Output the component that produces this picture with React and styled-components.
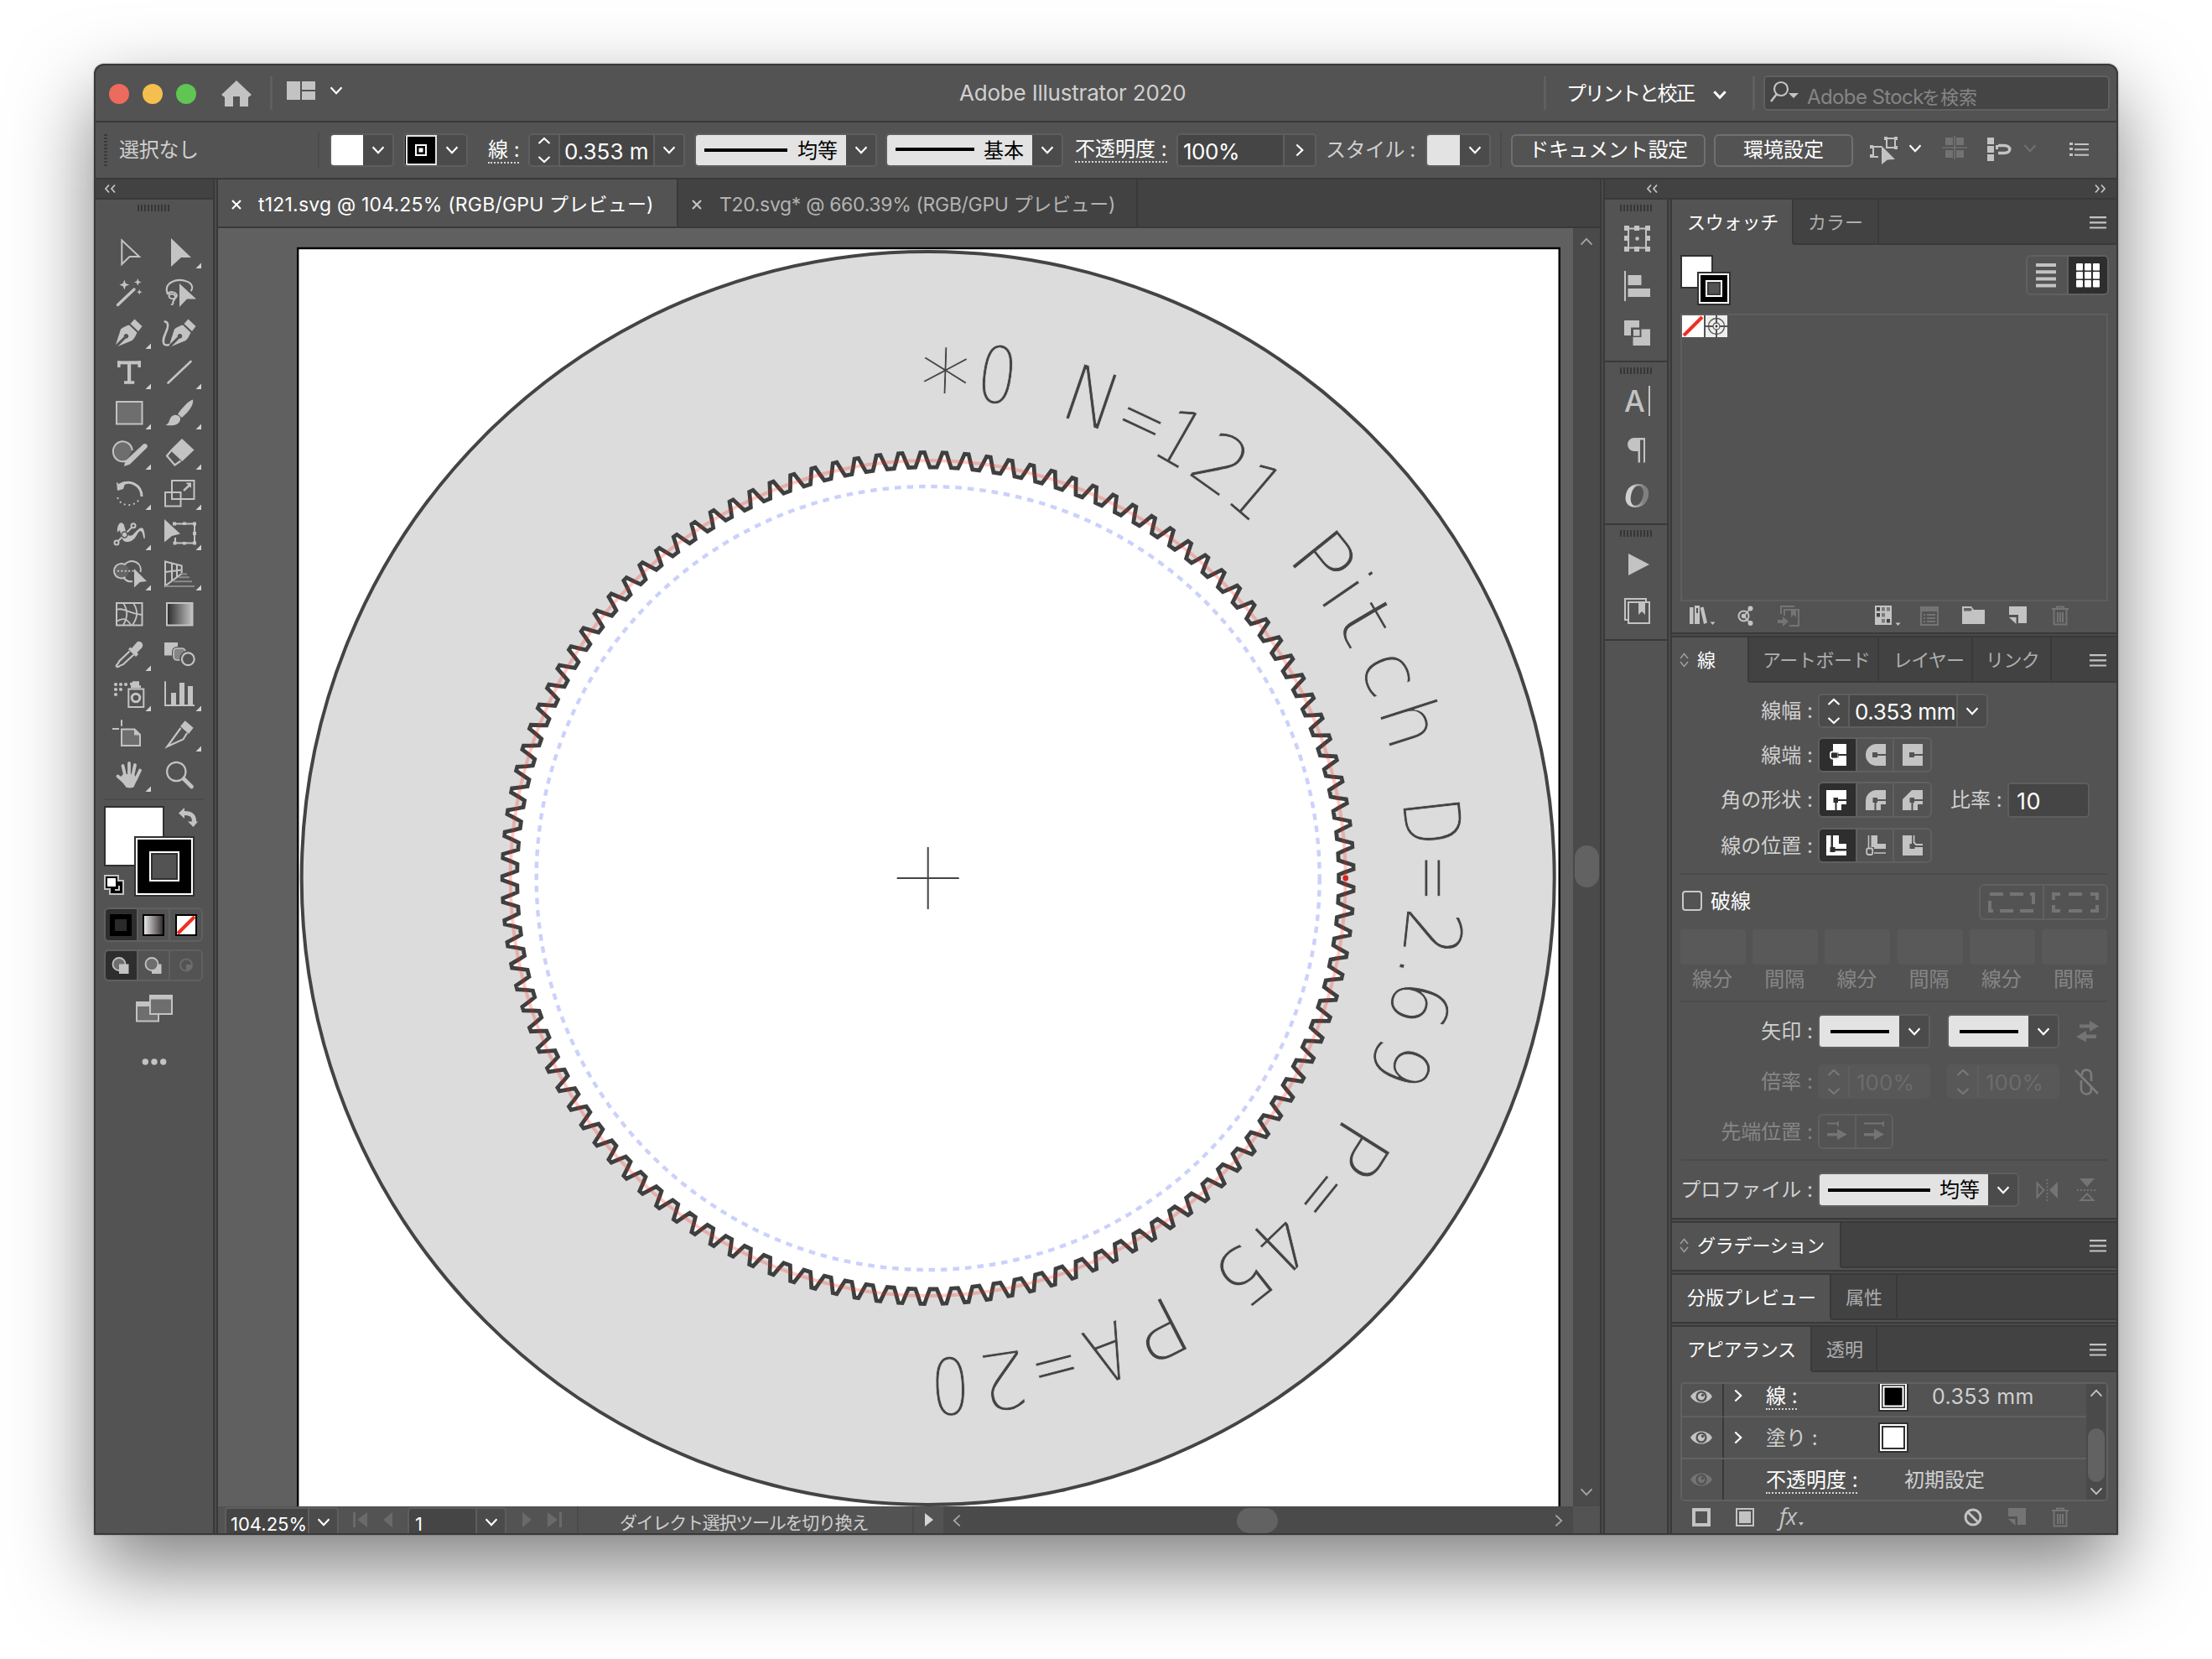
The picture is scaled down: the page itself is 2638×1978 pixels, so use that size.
import React from "react";
import styled, { createGlobalStyle, css } from "styled-components";

const C = {
  bg: "#535353",
  dark: "#424242",
  line: "#393939",
  soft: "#4a4a4a",
  input: "#454545",
  edge: "#646464",
  icon: "#c3c3c3",
  text: "#d0d0d0",
  dim: "#747474",
  dimText: "#868686",
  paper: "#e3e3e3",
  on: "#2e2e2e",
};

const Global = createGlobalStyle`
  *, *::before, *::after { box-sizing: border-box; }
  body { margin: 0; background: #fff; font-family: Inter, "Noto Sans CJK JP", sans-serif; overflow: hidden; }
`;

const place = css`
  flex: none;
  margin-left: ${(p) => p.$ml || 0}px;
  margin-top: ${(p) => p.$mt || 0}px;
`;

/* ---------- shell ---------- */
const Desktop = styled.div`
  width: 2638px;
  height: 1978px;
  padding: 76px 112px;
  background: #fff;
  overflow: hidden;
`;
const Window = styled.div`
  width: 2414px;
  height: 1754px;
  display: flex;
  flex-direction: column;
  border: 2px solid ${C.line};
  border-radius: 12px 12px 0 0;
  background: ${C.bg};
  overflow: hidden;
  box-shadow: 0 0 2px rgba(0, 0, 0, 0.4), 0 40px 96px rgba(0, 0, 0, 0.5);
`;
const TitleBar = styled.header`
  height: 68px;
  flex: none;
  display: flex;
  align-items: center;
  border-bottom: 2px solid ${C.line};
`;
const ControlBar = styled(TitleBar)``;
const Body = styled.div`
  height: 1614px;
  display: flex;
  background: ${C.soft};
`;
const Label = styled.span`
  ${place}
  display: block;
  width: ${(p) => (p.$w ? p.$w + "px" : "auto")};
  font-size: ${(p) => p.$size || 24}px;
  letter-spacing: ${(p) => p.$ls || 0}px;
  line-height: 30px;
  color: ${(p) => p.$c || C.text};
  text-align: ${(p) => p.$align || "left"};
  white-space: pre;
  overflow: ${(p) => (p.$clip ? "hidden" : "visible")};
`;
const Linked = styled(Label)`
  color: #fff;
  line-height: 28px;
  border-bottom: 2px dotted #d5d5d5;
`;
const Light = styled.i`
  ${place}
  width: 24px;
  height: 24px;
  border-radius: 50%;
  background: ${(p) => p.$c};
`;
const VRule = styled.i`
  ${place}
  width: ${(p) => p.$w || 3}px;
  height: ${(p) => p.$h || 40}px;
  background: ${(p) => p.$c || "#5f5f5f"};
`;
const Svg = styled.svg`
  ${place}
  display: block;
  overflow: visible;
`;
function Icon({ w, h, x = 0, y = 0, ml, mt, children, c = C.icon }) {
  return (
    <Svg width={w} height={h} viewBox={`${x} ${y} ${w} ${h}`} $ml={ml} $mt={mt} fill={c} stroke="none" color={c}>
      {children}
    </Svg>
  );
}
const chev = { down: 0, up: 180, left: 90, right: -90 };
function Chevron({ dir = "down", w = 24, h = 24, ml, mt, c = "#fff", sw = 2.4, s = 0.92 }) {
  return (
    <Icon w={w} h={h} x={-w / 2} y={-h / 2} ml={ml} mt={mt}>
      <path d="M-7 -4L0 3.5L7 -4" transform={`rotate(${chev[dir]}) scale(${s})`} fill="none" stroke={c} strokeWidth={sw} />
    </Icon>
  );
}

/* ---------- form parts ---------- */
const Box = styled.div`
  ${place}
  display: flex;
  align-items: stretch;
  width: ${(p) => p.$w}px;
  height: ${(p) => p.$h || 40}px;
  border: 2px solid ${(p) => (p.$off ? "#585858" : "#5e5e5e")};
  border-radius: 5px;
  background: ${(p) => (p.$off ? "#585858" : "#4b4b4b")};
  overflow: hidden;
`;
const Cell = styled.div`
  flex: ${(p) => (p.$w ? "none" : 1)};
  width: ${(p) => (p.$w ? p.$w + "px" : "auto")};
  display: flex;
  align-items: center;
  justify-content: ${(p) => (p.$start ? "flex-start" : "center")};
  padding-left: ${(p) => p.$pl || 0}px;
  background: ${(p) => p.$bg || "transparent"};
  border-left: ${(p) => (p.$rule ? "2px solid #5e5e5e" : "0")};
  overflow: hidden;
`;
const Stepper = ({ c = "#fff", h = 36 }) => (
  <Icon w={34} h={h} x={-17} y={-h / 2}>
    <path d="M-6.500 -8L0 -14L6.500 -8M-6.500 8L0 14L6.500 8" fill="none" stroke={c} strokeWidth="2.2" />
  </Icon>
);
const Sample = styled.i`
  ${place}
  width: ${(p) => p.$w}px;
  height: 4px;
  background: #000;
`;
const PushButton = styled.button`
  ${place}
  width: ${(p) => p.$w}px;
  height: 39px;
  padding: 0 0 1px;
  border: 2px solid #707070;
  border-radius: 6px;
  background: transparent;
  color: #fff;
  font: 24px/30px Inter, "Noto Sans CJK JP", sans-serif;
  letter-spacing: ${(p) => p.$ls || 0}px;
  white-space: nowrap;
`;
const Segments = styled.div`
  ${place}
  display: flex;
  width: ${(p) => p.$w}px;
  height: ${(p) => p.$h}px;
  border: 2px solid #606060;
  border-radius: 6px;
  overflow: hidden;
`;
const Segment = styled.div`
  flex: 1;
  display: flex;
  align-items: center;
  justify-content: center;
  background: ${(p) => (p.$on ? C.on : "transparent")};
  & + & {
    border-left: 2px solid #606060;
  }
`;
const GripBox = styled.i`
  ${place}
  display: block;
  width: 39px;
  height: 8px;
  background: repeating-linear-gradient(90deg, #363636 0 2px, transparent 2px 4px);
`;
const SideGrip = styled.i`
  ${place}
  width: 4px;
  height: 38px;
  background: repeating-linear-gradient(180deg, #3a3a3a 0 2px, transparent 2px 4px);
`;

/* ---------- tool dock ---------- */
const ToolDock = styled.aside`
  width: 142px;
  flex: none;
  background: ${C.bg};
  border-right: 2px solid ${C.line};
  display: flex;
  flex-direction: column;
`;
const DockHead = styled.div`
  height: 24px;
  flex: none;
  display: flex;
  align-items: center;
  background: ${C.dark};
  border-bottom: 2px solid ${C.line};
`;
const ToolGrid = styled.div`
  display: grid;
  grid-template-columns: 60px 60px;
  grid-auto-rows: 48px;
  margin: 20px 0 0 6px;
`;
const Divider = styled.i`
  ${place}
  display: block;
  height: 2px;
  width: ${(p) => p.$w}px;
  background: #4b4b4b;
`;
const S = { fill: "none", stroke: C.icon, strokeWidth: 2 };
const penBody = (
  <>
    <path d="M40.500 12.500L49.500 21L45 27L35.500 18z" />
    <path fillRule="evenodd" d="M34 19.500L43.500 28.500C41.500 33 40 36 37.500 38L20.500 45L30 35.500A2.800 2.800 0 1 0 27.800 33.500L18 43L24 24.500C27 22 30.500 20.500 34 19.500z" />
  </>
);
const tools = [
  [<path {...S} strokeWidth="2" d="M25.300 14.500L46 34H34.500L25.300 43z" />, 0],
  [<path d="M24 12L48 35H36L24 46z" />, 1],
  [<g><path d="M20.500 43.500L40 25" stroke={C.icon} strokeWidth="3.400" strokeLinecap="round" /><path d="M28.300 13.600L29.900 18L34.300 19.600L29.900 21.200L28.300 25.600L26.700 21.200L22.300 19.600L26.700 18zM44.300 12L45.500 15.200L48.700 16.400L45.500 17.600L44.300 20.800L43.100 17.600L39.900 16.400L43.100 15.200zM46.300 25L47.200 27.300L49.500 28.200L47.200 29.100L46.300 31.400L45.400 29.100L43.100 28.200L45.400 27.300z" /></g>, 0],
  [<g><path {...S} d="M20 31C14 16 32 12 41 15C49 17 51 23 47.500 27M20 31C22 27 29 27 31 32C30 38 22 37 21.500 33C22 29 29 30 29 34C29 39 25 38 26.500 41.500C26 43.500 24 43 24 43" /><path d="M34 18L54 36.500H43L34 46z" /></g>, 0],
  [<g>{penBody}</g>, 1],
  [<g><g transform="translate(4 0)">{penBody}</g><path {...S} strokeWidth="2.600" d="M15.700 15.500C20 15 21 19 19.500 24C17 31 13 37 15.500 42C17 44 20 43.500 22 43" /></g>, 0],
  [<g><rect x="20" y="14.400" width="28" height="4" /><rect x="20" y="14.400" width="3.600" height="7.600" /><rect x="44.400" y="14.400" width="3.600" height="7.600" /><rect x="32" y="16" width="4.200" height="25" /><rect x="28" y="38.200" width="12.200" height="3.600" /></g>, 1],
  [<path d="M20.500 40.500L47.500 15" stroke={C.icon} strokeWidth="2.600" strokeLinecap="round" />, 1],
  [<rect x="19" y="15" width="30.500" height="26.500" fill="#6e6e6e" stroke={C.icon} strokeWidth="2" />, 1],
  [<g><path d="M50 12.500C51.500 19 44 28 36.800 34L32 29.500C37 23 44 14 50 12.500z" /><path d="M30.500 31C34.500 31.500 36 34.500 34.500 38C32 43.500 24 44 17.500 42.800C22 41 21.500 37.500 23.500 34C25.500 31 28 30.500 30.500 31z" /></g>, 1],
  [<g><path d="M30.500 37.500A11.500 12 0 1 1 37.800 25" fill="#6e6e6e" stroke={C.icon} strokeWidth="2" /><path d="M28 44L29.500 37.500L51 17.500C54 15.500 57.500 19 55 22L35 41.500z" /></g>, 1],
  [<g><path d="M37 11L51.500 24.500L37.300 38L23 24.800z" /><path {...S} strokeWidth="2.200" d="M24 25.500L19 31.500L28.500 42.500L35.500 37.500" /></g>, 1],
  [<g><path d="M24 19C34 10.500 49 18 49 32" fill="none" stroke={C.icon} strokeWidth="3" /><path d="M19 14.500L21.500 17C24 15.500 27 14 30 14L27 23L20 25z" /><path d="M20.500 34C24 44 41 46 47.500 33" fill="none" stroke={C.icon} strokeWidth="2.200" strokeDasharray="0.1 5.600" strokeLinecap="round" /></g>, 1],
  [<g {...S} strokeWidth="2"><rect x="25" y="13" width="26.500" height="22" /><rect x="17" y="27" width="18.500" height="16.500" /><path d="M39 25L46.500 18" strokeWidth="2.400" /><path d="M41.500 15.500H48V22z" fill={C.icon} stroke="none" /></g>, 1],
  [<g><path d="M20 27C19 16 25 12 28 18C30 27 32 33 38 30C44 24 50 16 52 26C53 30 53 33 52.500 34.500C50 34 51 25 47 25C43 27 42 37 33 38C27 38.500 26 36 24 28C23 23 22 24 20 27z" /><path {...S} d="M20.500 37.500L37.500 20.500" /><circle cx="19" cy="39" r="2.500" fill={C.bg} stroke={C.icon} strokeWidth="2" /><circle cx="39" cy="18.700" r="2.500" fill={C.bg} stroke={C.icon} strokeWidth="2" /><circle cx="28.500" cy="29.500" r="3.400" fill="none" stroke={C.bg} strokeWidth="1.500" /></g>, 1],
  [<g><path {...S} strokeWidth="2" d="M31 16.500H52V39.500H29V33M33 16.500H28.500" /><path d="M16 11L35 28.500L25 31L16 38.500z" /><path d="M26 14.500h4v4h-4zM38 14.500h4v3.600h-4zM50 14.500h4v4h-4zM50 26h4v4h-4zM50 37.500h4v4h-4zM38 38h4v3.600h-4zM26.500 37.500h4v4h-4z" /></g>, 1],
  [<g><circle cx="25" cy="24.700" r="8.600" fill="#6e6e6e" opacity="0.7" /><path {...S} d="M29 16.500C39 8 50 17 47.500 26M28 33.500C31 37 34 38 38 37M29.500 17.500A8.700 8.700 0 1 0 29.500 32" /><path d="M20 24.700H40" stroke={C.icon} strokeWidth="2" strokeDasharray="2 2.400" /><path d="M40 22L55 37L47 38L40 44.500z" /></g>, 1],
  [<g><path {...S} d="M17 13.500L36.700 18.500V28L17 42.500zM25 15.500V36.500M31 17V32M17 26L36.700 23.500" /><path d="M36 28.500H43M33 32.200H46M27 37.200H49M17 43H52" stroke="#8b8b8b" strokeWidth="2" /></g>, 1],
  [<g><rect {...S} x="19" y="15" width="30.500" height="26.500" /><path {...S} strokeWidth="1.800" d="M27 15C33 24 32 33 27 41M39 15C45 24 44 33 38 41M19 23C28 20 32 27 49 29M19 37C28 31 32 35 36 41" /></g>, 0],
  [<g><defs><linearGradient id="toolGrad"><stop offset="0" stopColor="#2b2b2b" /><stop offset="1" stopColor="#c3c3c3" /></linearGradient></defs><rect x="19" y="15" width="30.500" height="26.500" fill="url(#toolGrad)" stroke={C.icon} strokeWidth="2" /></g>, 0],
  [<g><path d="M37 21L43 14C46 10.500 52.500 15 49.500 20L43.500 26L45 28L42 31L33 22L35.500 19.500z" /><path {...S} strokeWidth="2.200" d="M34.500 24.500L22 36.500C22 39.500 18 40 18.800 42.500C20.500 45 23 40.500 26.500 40.500L39.500 28.500" /></g>, 1],
  [<g><rect x="16" y="14" width="16" height="15.500" /><rect x="27" y="21" width="14" height="14" rx="4" fill="#858585" stroke={C.bg} strokeWidth="4" /><rect x="27" y="21" width="14" height="14" rx="4" fill="#858585" stroke={C.icon} strokeWidth="1.600" /><circle cx="44.300" cy="33.700" r="7.600" fill={C.bg} stroke={C.bg} strokeWidth="5" /><circle cx="44.300" cy="33.700" r="7.400" {...S} strokeWidth="2.200" /></g>, 0],
  [<g><rect x="33.300" y="21.500" width="18" height="21.500" {...S} /><path d="M36 16h2v-3.800h8v5h2v3h-12z" /><circle cx="42" cy="32" r="4.800" {...S} strokeWidth="3" />{[[18, 16], [24, 16], [30, 16], [37, 15.500], [18, 22], [24, 22], [18, 28]].map(([x, y], i) => <circle key={i} cx={x} cy={y} r="2.100" />)}</g>, 1],
  [<g><path {...S} d="M17 12.300V41H52" /><path d="M24 26h6v15h-6zM34 14h6v27h-6zM44 18h6v23h-6z" /></g>, 1],
  [<g><path d="M25 21.500H40.500L47 28V41H25z" fill="#6e6e6e" stroke={C.icon} strokeWidth="2" /><path d="M40 20.500L48 28.500H40zM14 20h8v2h-8zM24 10.300h2v7.500h-2z" /></g>, 0],
  [<g><path d="M40.700 11.300L50.700 19.700L45 27L35 18z" /><path {...S} strokeWidth="2.200" d="M35.500 20L19.500 42L38.500 33.500L43 26" /></g>, 1],
  [<g><path d="M22 32L31 43H39L43 34L40 27H27z" /><path d="M26.500 17L29.500 30M34 14V30M41 16L38 30M47 22.500L41.500 34M20.500 29.500L27 35" fill="none" stroke={C.icon} strokeWidth="3.800" strokeLinecap="round" /><path d="M27 36L30 42C33 44 38 44 40 41L43.500 33L40 28z" /></g>, 1],
  [<g><circle cx="30.300" cy="24" r="11.200" {...S} strokeWidth="2.200" /><path d="M39 32.500L48.500 42" stroke={C.icon} strokeWidth="4.600" strokeLinecap="round" /></g>, 0],
];
function Tool({ art, more }) {
  return (
    <Icon w={60} h={48}>
      {art}
      {more ? <path d="M60 41.500V48H53.500z" fill="#d2d2d2" /> : null}
    </Icon>
  );
}

const DoubleChevron = ({ right, ml }) => (
  <Icon w={16} h={12} ml={ml}>
    <path d={right ? "M2 1.500L6 6L2 10.500M9 1.500L13 6L9 10.500" : "M6 1.500L2 6L6 10.500M13 1.500L9 6L13 10.500"} fill="none" stroke={C.icon} strokeWidth="1.800" />
  </Icon>
);

function ToolPanel() {
  return (
    <ToolDock>
      <DockHead><DoubleChevron ml={10} /></DockHead>
      <GripBox $ml={50} $mt={6} />
      <ToolGrid>
        {tools.map(([art, more], i) => <Tool key={i} art={art} more={more} />)}
      </ToolGrid>
      <Divider $w={120} $ml={10} $mt={8} />
      <Icon w={120} h={112} ml={10} mt={7}>
        <rect x="1" y="1" width="70" height="70" fill="#fff" stroke="#303030" strokeWidth="2" />
        <rect x="36" y="36" width="72" height="72" fill="#303030" />
        <rect x="38" y="38" width="68" height="68" fill="#fff" />
        <rect x="40" y="40" width="64" height="64" fill="#000" />
        <rect x="54" y="54" width="36" height="36" fill="#fff" />
        <rect x="56" y="56" width="32" height="32" fill="#303030" />
        <rect x="58" y="58" width="28" height="28" fill="#535353" />
        <path d="M95 8.500C104 8 108 12 107.500 19" fill="none" stroke={C.icon} strokeWidth="5" />
        <path d="M96 2V15L89 8.500zM100 18.500H112L106.500 25z" />
        <path d="M0 82h18v6h6v18H6v-6H0z" />
        <rect x="8" y="90" width="14" height="14" fill="#000" />
        <rect x="2" y="84" width="14" height="14" fill="#000" />
        <rect x="4" y="86" width="10" height="10" fill="#fff" />
        <path d="M13 100H18V95" fill="none" stroke={C.icon} strokeWidth="2" />
      </Icon>
      <Segments $w={118} $h={41} $ml={10} $mt={9}>
        <Segment $on><Icon w={26} h={26}><rect x="3" y="3" width="20" height="20" fill="#2a2a2a" stroke="#000" strokeWidth="6" /></Icon></Segment>
        <Segment>
          <Icon w={26} h={26}>
            <defs><linearGradient id="modeGrad"><stop offset="0" stopColor="#eee" /><stop offset="1" stopColor="#2f2729" /></linearGradient></defs>
            <rect x="1" y="1" width="24" height="24" fill="url(#modeGrad)" stroke="#000" strokeWidth="2" />
          </Icon>
        </Segment>
        <Segment><Icon w={26} h={26}><rect x="1" y="1" width="24" height="24" fill="#fff" stroke="#000" strokeWidth="2" /><path d="M3 23L23 3" stroke="#ee2f24" strokeWidth="4" /></Icon></Segment>
      </Segments>
      <Segments $w={118} $h={38} $ml={10} $mt={9}>
        <Segment $on><Icon w={22} h={22}><circle cx="9" cy="9.500" r="7.500" fill="#6e6e6e" stroke={C.icon} strokeWidth="1.800" /><rect x="9" y="9.500" width="11.500" height="11.500" /></Icon></Segment>
        <Segment><Icon w={22} h={22}><rect x="9" y="9.500" width="11.500" height="11.500" /><circle cx="9" cy="9.500" r="7.500" fill="#6e6e6e" stroke={C.icon} strokeWidth="1.800" /></Icon></Segment>
        <Segment><Icon w={22} h={22} c="#6e6e6e"><circle cx="11" cy="10.500" r="7" fill="none" stroke="#6a6a6a" strokeWidth="2" /><path d="M11 10h7.500A7.500 7.500 0 0 1 11 18z" /></Icon></Segment>
      </Segments>
      <Icon w={44} h={33} ml={48} mt={16}>
        <rect x="1" y="9" width="26" height="22.500" fill="#6e6e6e" stroke={C.icon} strokeWidth="2" />
        <rect x="0" y="8" width="17" height="6" />
        <rect x="17" y="1" width="26" height="22" fill="#6e6e6e" stroke={C.icon} strokeWidth="2" />
        <rect x="16" y="0" width="28" height="5.500" />
      </Icon>
      <Icon w={30} h={10} ml={55} mt={42}><circle cx="4.300" cy="5" r="3.700" /><circle cx="15" cy="5" r="3.700" /><circle cx="25.700" cy="5" r="3.700" /></Icon>
    </ToolDock>
  );
}

/* ---------- document ---------- */
const DocumentArea = styled.main`
  width: 1652px;
  flex: none;
  margin-left: 2px;
  border: solid ${C.line};
  border-width: 0 2px;
  display: flex;
  flex-direction: column;
  background: ${C.dark};
`;
const TabStrip = styled.div`
  height: 58px;
  flex: none;
  display: flex;
  border-bottom: 2px solid ${C.line};
`;
const DocTab = styled.div`
  display: flex;
  align-items: center;
  width: ${(p) => p.$w}px;
  padding: 4px 0 0 15px;
  border-right: 2px solid ${C.line};
  background: ${(p) => (p.$on ? C.bg : "transparent")};
`;
const CanvasRow = styled.div`
  display: flex;
  height: 1524px;
  background: #606060;
`;
const ScrollColumn = styled.div`
  width: 32px;
  display: flex;
  flex-direction: column;
  align-items: center;
  background: ${C.soft};
`;
const Thumb = styled.i`
  ${place}
  width: ${(p) => p.$w}px;
  height: ${(p) => p.$h}px;
  border-radius: 15px;
  background: #626262;
`;
const StatusBar = styled.footer`
  height: 32px;
  display: flex;
  align-items: center;
  background: ${C.bg};
`;
const ScrollRow = styled.div`
  ${place}
  width: 751px;
  height: 32px;
  display: flex;
  align-items: center;
  background: ${C.soft};
`;

const CX = 1106.7;
const CY = 1047;
const polar = (deg, r) => {
  const t = (deg * Math.PI) / 180;
  return `${(CX + r * Math.sin(t)).toFixed(2)} ${(CY - r * Math.cos(t)).toFixed(2)}`;
};
const TEETH = 121;
const STEP = 360 / TEETH;
const gearPath = () => {
  const pts = [];
  for (let k = 0; k < TEETH; k++) {
    const a = 90 + k * STEP;
    pts.push([a - 0.48, 490], [a + 0.48, 490], [a + 0.8, 497], [a + STEP / 2 - 0.27, 507.5], [a + STEP / 2 + 0.27, 507.5], [a + STEP - 0.8, 497]);
  }
  return "M" + pts.map(([a, r]) => polar(a, r)).join("L") + "Z";
};
/* character, angle on the ring, horizontal stretch */
const engraving = [
  ["*", 1.97, 1], ["0", 7.85, 0.8], ["N", 18.87, 0.92], ["=", 25.07, 0.74], ["1", 29.8, 0.84], ["2", 35.3, 0.98], ["1", 40.3, 0.84], ["P", 51.2, 1.08], ["i", 55.5, 1],
  ["t", 59.7, 1.3], ["c", 66, 0.98], ["h", 72.2, 0.95], ["D", 83.6, 0.8], ["=", 90, 0.74], ["2", 96.2, 0.98], [".", 100.5, 1], ["6", 104.4, 0.92], ["9", 111.4, 0.92],
  ["P", 122.3, 1.08], ["=", 128.8, 0.74], ["4", 136, 0.9], ["5", 141.6, 0.98], ["P", 152.8, 1.08], ["A", 159.2, 0.78], ["=", 165.4, 0.74], ["2", 171.5, 0.98], ["0", 177.5, 0.8],
];
const EngravedText = styled.text`
  font-family: "DejaVu Sans", sans-serif;
  font-weight: 200;
  font-size: ${(p) => p.$size}px;
  fill: #444;
  stroke: #dcdcdc;
  stroke-width: 0.9px;
  text-anchor: middle;
`;
function Artwork() {
  return (
    <Svg width="1616" height="1524" viewBox="260 272 1616 1524" style={{ overflow: "hidden" }}>
      <rect x="355.200" y="296" width="1504.500" height="1600" fill="#fff" stroke="#000" strokeWidth="2.400" />
      <circle cx={CX} cy={CY} r="747" fill="#dcdcdc" stroke="#444" strokeWidth="4" />
      <path d={gearPath()} fill="#fff" stroke="#3f3f3f" strokeWidth="4.800" />
      <circle cx={CX} cy={CY} r="498" fill="none" stroke="#ff2010" strokeOpacity="0.24" strokeWidth="4" />
      <circle cx={CX} cy={CY} r="467" fill="none" stroke="#cbd1fb" strokeWidth="4.400" strokeDasharray="7.600 6.900" />
      <circle cx={CX + 498} cy={CY} r="3.400" fill="#d8231c" />
      <path d={`M${CX - 37} ${CY}h74M${CX} ${CY - 37}v74`} stroke="#444" strokeWidth="2" />
      {engraving.map(([ch, deg, sx], i) => (
        <EngravedText key={i} $size={ch === "*" ? 122 : 94} transform={`translate(${CX} ${CY}) rotate(${deg}) translate(0 ${ch === "*" ? -543 : -572}) scale(${sx} 1)`}>
          {ch}
        </EngravedText>
      ))}
    </Svg>
  );
}
const Close = ({ c = "#fff" }) => <Icon w={14} h={14}><path d="M2 2L12 12M12 2L2 12" stroke={c} strokeWidth="2.200" /></Icon>;

function DocumentPane() {
  return (
    <DocumentArea>
      <TabStrip>
        <DocTab $on $w={549}><Close /><Label $ml={19} $size={23} $ls={0.2} $c="#fff">t121.svg @ 104.25% (RGB/GPU プレビュー)</Label></DocTab>
        <DocTab $w={548}><Close c={C.icon} /><Label $ml={20} $size={23} $ls={-0.33} $c="#b3b3b3">T20.svg* @ 660.39% (RGB/GPU プレビュー)</Label></DocTab>
      </TabStrip>
      <CanvasRow>
        <Artwork />
        <ScrollColumn>
          <Chevron dir="up" mt={4} c="#a5a5a5" sw={2} />
          <Thumb $w={29} $h={50} $mt={708} />
          <Chevron mt={709} c="#a5a5a5" sw={2} />
        </ScrollColumn>
      </CanvasRow>
      <StatusBar>
        <Box $w={136} $h={36} $ml={8} $mt={6}>
          <Cell $start $pl={5} $bg={C.input}><Label $size={22} $c="#fff" $mt={3}>104.25%</Label></Cell>
          <Cell $w={35} $rule><Chevron /></Cell>
        </Box>
        <Icon w={52} h={20} ml={17} c="#6a6a6a"><path d="M0 1h3v18H0zM17 1v18L5 10zM47 1v18L36 10z" /></Icon>
        <Box $w={118} $h={36} $ml={13} $mt={6}>
          <Cell $start $pl={7} $bg={C.input}><Label $size={22} $c="#fff" $mt={3}>1</Label></Cell>
          <Cell $w={35} $rule><Chevron /></Cell>
        </Box>
        <Icon w={50} h={20} ml={19} c="#6a6a6a"><path d="M0 1v18L11 10zM30 1v18L42 10zM44 1h3v18h-3z" /></Icon>
        <VRule $w={2} $h={32} $ml={15} $c="#4a4a4a" />
        <Label $ml={49} $mt={7} $size={21} $w={301} $ls={-1.25} $c="#cfcfcf">ダイレクト選択ツールを切り換え</Label>
        <VRule $w={2} $h={32} $ml={48} $c="#4a4a4a" />
        <Icon w={12} h={18} ml={12} c="#d5d5d5"><path d="M1 1L11 9L1 17z" /></Icon>
        <ScrollRow $ml={11}>
          <Chevron dir="left" ml={4} mt={2} c="#a5a5a5" sw={2} />
          <Thumb $w={49} $h={30} $ml={322} $mt={2} />
          <Chevron dir="right" ml={323} mt={2} c="#a5a5a5" sw={2} />
        </ScrollRow>
      </StatusBar>
    </DocumentArea>
  );
}

/* ---------- right dock ---------- */
const RightDock = styled.aside`
  width: 612px;
  flex: none;
  margin-left: 2px;
  border-left: 2px solid ${C.line};
  display: flex;
  flex-direction: column;
`;
const DockBody = styled.div`
  display: flex;
  height: 1590px;
`;
const IconRail = styled.div`
  width: 76px;
  background: ${C.bg};
  border-right: 2px solid ${C.line};
`;
const RailGroup = styled.div`
  height: ${(p) => p.$h}px;
  border-bottom: 2px solid ${C.line};
  padding-left: 18px;
  display: flex;
  flex-direction: column;
  align-items: flex-start;
`;
const Panels = styled.div`
  width: 532px;
  margin-left: 2px;
  border-left: 2px solid ${C.line};
  display: flex;
  flex-direction: column;
  gap: 2px;
`;
const Panel = styled.section`
  height: ${(p) => p.$h}px;
  flex: none;
  display: flex;
  flex-direction: column;
  background: ${C.bg};
  border-top: ${(p) => (p.$first ? 0 : 2)}px solid ${C.line};
  border-bottom: ${(p) => (p.$last ? 0 : 2)}px solid ${C.line};
`;
const PanelTabs = styled.div`
  display: flex;
  height: 54px;
  flex: none;
`;
const PanelTab = styled.div`
  flex: none;
  display: flex;
  align-items: center;
  width: ${(p) => p.$w}px;
  padding: 1px 0 0 ${(p) => p.$pl}px;
  border-right: 2px solid ${C.line};
  border-bottom: 2px solid ${(p) => (p.$on ? C.bg : C.line)};
  background: ${(p) => (p.$on ? C.bg : C.dark)};
`;
const TabFiller = styled.div`
  flex: 1;
  display: flex;
  align-items: center;
  justify-content: flex-end;
  padding: 2px 12px 0 0;
  border-bottom: 2px solid ${C.line};
  background: ${C.dark};
`;
const Burger = () => <Icon w={20} h={15}><path d="M0 0h20v2.200H0zM0 6.200h20v2.200H0zM0 12.400h20v2.200H0z" /></Icon>;
const Updown = () => <Icon w={11} h={18}><path d="M1 7L5.500 1.500L10 7M1 11L5.500 16.500L10 11" fill="none" stroke="#9c9c9c" strokeWidth="1.600" /></Icon>;
function Tabs({ items, menu = true, fold }) {
  return (
    <PanelTabs>
      {items.map(([text, w, pl, ls], i) => (
        <PanelTab key={text} $on={i === 0} $w={w} $pl={i === 0 && fold ? 9 : pl}>
          {i === 0 && fold ? <Updown /> : null}
          <Label $size={22} $ml={i === 0 && fold ? 10 : 0} $ls={ls} $c={i === 0 ? "#fff" : "#aeaeae"}>{text}</Label>
        </PanelTab>
      ))}
      <TabFiller>{menu ? <Burger /> : null}</TabFiller>
    </PanelTabs>
  );
}
const Row = styled.div`
  ${place}
  display: flex;
  align-items: center;
  height: ${(p) => p.$h}px;
`;
const SwatchWell = styled.div`
  ${place}
  width: 510px;
  height: 343px;
  border: 2px solid #5e5e5e;
  display: flex;
  gap: 2px;
`;
const DashField = styled.div`
  display: flex;
  flex-direction: column;
  gap: 3px;
  width: 78px;
  &::before {
    content: "";
    height: 42px;
    border-radius: 4px;
    background: #595959;
  }
`;
const DashRow = styled.div`
  ${place}
  display: flex;
  justify-content: space-between;
  width: 509px;
`;
const Checkbox = styled.i`
  ${place}
  width: 24px;
  height: 24px;
  border: 2px solid #c8c8c8;
  border-radius: 4px;
`;
const Caption = ({ children, dim }) => <Label $w={168} $mt={1} $align="right" $c={dim ? C.dimText : C.text}>{children}</Label>;

const Trash = ({ ml, c }) => (
  <Icon w={22} h={24} ml={ml} c={c}>
    <path d="M1 4H21M7 4V1.500H15V4M3.500 5V22.500H18.500V5M8 8V20M11 8V20M14 8V20" fill="none" stroke={c} strokeWidth="2" />
  </Icon>
);
const NewItem = ({ ml, c }) => <Icon w={21} h={22} ml={ml} c={c}><path d="M0 0H21V20H11V10H0zM0 13H8.500V21z" /></Icon>;

const capIcons = [
  <g fill="#fff"><path fillRule="evenodd" d="M8 0H24V12H14.500V10.500H8zM14.500 14H24V26H8V16.500H14.500z" /><rect x="5" y="9.500" width="8" height="8" rx="2" fill="none" stroke="#fff" strokeWidth="1.800" /><rect x="7" y="10.500" width="6.500" height="6" fill={C.on} /></g>,
  <g><path d="M24 0V12H14V10H8V16H14V14H24V26H13A13 13 0 0 1 13 0z" /></g>,
  <g><path d="M0 0H24V12H14V10H8V16H14V14H24V26H0z" /></g>,
];
const notch = "V11H14V9H8.500V15H10.500V24H0";
const joinIcons = [
  <path fill="#fff" d={`M0 0H24${notch}zM12.500 15H14V13H24V17H18V24H12.500z`} />,
  <path d={`M13 0H24${notch}V13A13 13 0 0 1 13 0zM12.500 15H14V13H24V17H18V24H12.500z`} />,
  <path d={`M11 0H24${notch}V11zM12.500 15H14V13H24V17H18V24H12.500z`} />,
];
const alignIcons = [
  <path fill="#fff" d="M0 0H5.500V14H4.500V20H10.500V18.500H24V24H0zM8 0H15V10H24V16H10.500V14H8z" />,
  <g><path d="M6.500 0H14V10H24V16H10V14H6.500z" /><path d="M3.500 0V15M10 21H24" stroke={C.icon} strokeWidth="1.600" /><rect x="1.200" y="15.500" width="7" height="7.500" rx="2" fill="none" stroke={C.icon} strokeWidth="1.800" /></g>,
  <g><path d="M0 0H11V10H8.500V16H14.500V14H24V24H0z" /><path d="M13.500 0V8.500L16 11H24" fill="none" stroke={C.icon} strokeWidth="1.800" /></g>,
];
function TriSegments({ icons, h, ih }) {
  return (
    <Segments $w={136} $h={h} $ml={6}>
      {icons.map((g, i) => <Segment key={i} $on={i === 0}><Icon w={24} h={ih} ml={i ? 1 : -2}>{g}</Icon></Segment>)}
    </Segments>
  );
}
function StrokeCombo({ w, ml, line, text }) {
  return (
    <Box $w={w} $ml={ml} $h={41}>
      <Cell $bg={C.paper}><Sample $w={line} />{text ? <Label $ml={11} $mt={1} $c="#000">{text}</Label> : null}</Cell>
      <Cell $w={35}><Chevron /></Cell>
    </Box>
  );
}
const ScaleField = ({ ml }) => (
  <Box $w={134} $h={41} $ml={ml} $off>
    <Cell $w={34}><Stepper c="#787878" /></Cell>
    <Cell $rule $start $pl={8}><Label $size={26} $mt={3} $c="#6c6c6c">100%</Label></Cell>
  </Box>
);

function SwatchPanel() {
  return (
    <Panel $first $h={518}>
      <Tabs items={[["スウォッチ", 145, 18, -0.2], ["カラー", 102, 17, 0]]} />
      <Row $h={60} $mt={12} $ml={10}>
        <Icon w={60} h={60}>
          <rect x="1" y="1" width="37" height="38" fill="#fff" stroke="#303030" strokeWidth="2" />
          <rect x="20" y="20" width="40" height="40" fill="#303030" />
          <rect x="22" y="22" width="36" height="36" fill="#fff" />
          <rect x="24" y="24" width="32" height="32" fill="#000" />
          <rect x="31" y="31" width="18" height="18" fill="#3a3a3a" stroke="#fff" strokeWidth="2" />
          <rect x="34" y="34" width="12" height="12" fill="#535353" />
        </Icon>
        <Segments $w={99} $h={48} $ml={352} $mt={-12}>
          <Segment><Icon w={24} h={29} ml={-2}><path d="M0 0h24v4H0zM0 8.200h24v4H0zM0 16.400h24v4H0zM0 24.600h24v4H0z" /></Icon></Segment>
          <Segment $on><Icon w={28} h={29} ml={1} c="#fff">{[0, 10, 20].map((y) => [0, 10, 20].map((x) => <rect key={`${x}-${y}`} x={x} y={y} width="8" height="8.500" rx="1" />))}</Icon></Segment>
        </Segments>
      </Row>
      <SwatchWell $ml={10} $mt={10}>
        <Icon w={26} h={26}><rect width="26" height="26" fill="#fff" /><path d="M2 24L24 2" stroke="#ee2f24" strokeWidth="4" /></Icon>
        <Icon w={26} h={26}>
          <rect width="26" height="26" fill="#eee" />
          <g fill="none" stroke="#555" strokeWidth="1.300"><circle cx="13" cy="13" r="9.500" /><circle cx="13" cy="13" r="4" /><path d="M13 0V9M13 17V26M0 13H9M17 13H26" strokeWidth="2" /></g>
          <circle cx="13" cy="13" r="1.400" fill="#333" />
        </Icon>
      </SwatchWell>
      <Row $h={34} $mt={0} $ml={21}>
        <Icon w={32} h={24}><path d="M0 2h4.500v20H0zM6 0h6v22H6zM12.500 2.500L16.500 1.500L21 20.500L17 22zM24.500 19.500h6l-3 3.500z" /><path d="M8 3h2v6H8z" fill={C.bg} /></Icon>
        <Icon w={20} h={24} ml={25}><circle cx="7.500" cy="12.500" r="6" fill="none" stroke={C.icon} strokeWidth="2" /><circle cx="7.500" cy="12.500" r="2.800" /><circle cx="15.500" cy="3.500" r="3" /><circle cx="15.500" cy="21" r="3" /><path d="M8 12L15.500 3.500M8 13L15.500 21" stroke={C.icon} strokeWidth="1.800" /></Icon>
        <Icon w={27} h={25} ml={28} c={C.dim}><path d="M4 10V1H20M8 12V5H25V24H14" fill="none" stroke={C.dim} strokeWidth="2" /><path d="M16 5h6v9l-3-3l-3 3zM0 17h6v-4l7 6l-7 6v-4H0z" /></Icon>
        <Icon w={32} h={24} ml={89}><rect x="0" y="0" width="20" height="23" />{[[2, 2], [8, 2], [14, 2], [2, 9], [8, 9], [8, 16], [14, 16]].map(([x, y], i) => <rect key={i} x={x} y={y} width="4" height="4.500" fill={i % 3 ? "#7a7a7a" : "#444"} />)}<path d="M24.500 20.500h6l-3 3.500z" /></Icon>
        <Icon w={22} h={23} ml={22} c={C.dim}><path d="M1 1H21V22H1z" fill="none" stroke={C.dim} strokeWidth="2" /><path d="M1 1h20v5H1zM4 9h2v2H4zM8 9h10v2H8zM4 13h2v2H4zM8 13h10v2H8zM4 17h2v2H4zM8 17h10v2H8z" /></Icon>
        <Icon w={27} h={22} ml={28}><path d="M0 0H11L14 4H27V21H0z" /><path d="M2 5.500H10.500L12 3.500L10 2H2z" fill={C.bg} opacity="0.850" /></Icon>
        <NewItem ml={29} c={C.icon} />
        <Trash ml={29} c={C.dim} />
      </Row>
    </Panel>
  );
}

function StrokePanel() {
  return (
    <Panel $h={696}>
      <Tabs fold items={[["線", 92, 9, 0], ["アートボード", 155, 16, -0.4], ["レイヤー", 112, 17, -0.8], ["リンク", 94, 15, -0.6]]} />
      <Row $h={41} $mt={13}>
        <Caption>線幅 :</Caption>
        <Box $w={203} $h={41} $ml={6}>
          <Cell $w={34}><Stepper /></Cell>
          <Cell $rule $start $pl={6} $bg={C.input}><Label $size={26} $w={119} $mt={2} $ls={-0.4} $clip $c="#fff">0.353 mm</Label></Cell>
          <Cell $w={36} $rule><Chevron /></Cell>
        </Box>
      </Row>
      <Row $h={42} $mt={11}><Caption>線端 :</Caption><TriSegments icons={capIcons} h={42} ih={26} /></Row>
      <Row $h={43} $mt={11}>
        <Caption>角の形状 :</Caption>
        <TriSegments icons={joinIcons} h={43} ih={24} />
        <Label $ml={22} $mt={1} $w={62}>比率 :</Label>
        <Box $w={98} $h={42} $ml={6}><Cell $start $pl={9} $bg={C.input}><Label $size={27} $mt={4} $ls={0.5} $c="#fff">10</Label></Cell></Box>
      </Row>
      <Row $h={42} $mt={12}><Caption>線の位置 :</Caption><TriSegments icons={alignIcons} h={42} ih={24} /></Row>
      <Divider $w={509} $ml={10} $mt={12} />
      <Row $h={43} $mt={11}>
        <Checkbox $ml={12} $mt={-3} />
        <Label $ml={10} $mt={-2} $w={50} $c="#fff">破線</Label>
        <Segments $w={154} $h={43} $ml={270}>
          <Segment><Icon w={56} h={24}><path d="M2 2H18M26 2H42M50 2H54V14M2 10V22H6M14 22H30M38 22H54" fill="none" stroke={C.dim} strokeWidth="4" /></Icon></Segment>
          <Segment><Icon w={56} h={24}><path d="M10 2H2V9M20 2H36M46 2H54V9M2 15V22H10M20 22H36M46 22H54V15" fill="none" stroke={C.dim} strokeWidth="4" /></Icon></Segment>
        </Segments>
      </Row>
      <DashRow $mt={11} $ml={10}>
        {["線分", "間隔", "線分", "間隔", "線分", "間隔"].map((t, i) => <DashField key={i}><Label $align="center" $ml={-2} $c={C.dimText}>{t}</Label></DashField>)}
      </DashRow>
      <Divider $w={509} $ml={10} $mt={10} />
      <Row $h={41} $mt={14}>
        <Caption>矢印 :</Caption>
        <StrokeCombo w={134} ml={6} line={70} />
        <StrokeCombo w={134} ml={20} line={70} />
        <Icon w={28} h={26} ml={20} c={C.dim}><path d="M4 4.500H16V0L27 6.500L16 13V8.500H4zM24 16.500H12V12L0 19L12 25.500V21H24z" /></Icon>
      </Row>
      <Row $h={41} $mt={19}>
        <Caption dim>倍率 :</Caption>
        <ScaleField ml={6} />
        <ScaleField ml={20} />
        <Icon w={30} h={32} ml={18} c={C.dim}><path d="M9 8V6C9 0 20 0 20 7V15M8 14V24C8 32 20 33 20 25V22M1 2L28 30" fill="none" stroke="#7c7c7c" strokeWidth="2.600" /></Icon>
      </Row>
      <Row $h={42} $mt={18}>
        <Caption dim>先端位置 :</Caption>
        <Segments $w={90} $h={42} $ml={6}>
          <Segment><Icon w={24} h={24} ml={-1} c={C.dim}><path d="M0 2.500H13V0V6" fill="none" stroke={C.dim} strokeWidth="1.800" /><path d="M0 14H12V9L24 15.500L12 22V17.500H0z" /></Icon></Segment>
          <Segment><Icon w={24} h={24} c={C.dim}><path d="M0 2.500H23V0V6" fill="none" stroke={C.dim} strokeWidth="1.800" /><path d="M0 14H12V9L24 15.500L12 22V17.500H0z" /></Icon></Segment>
        </Segments>
      </Row>
      <Divider $w={509} $ml={10} $mt={12} />
      <Row $h={41} $mt={14}>
        <Caption>プロファイル :</Caption>
        <StrokeCombo w={240} ml={6} line={122} text="均等" />
        <Icon w={28} h={26} ml={20} c={C.dim}><path d="M1.500 4.500V21.500L9.500 13z" fill="none" stroke={C.dim} strokeWidth="2" /><path d="M26 3V23L16 13z" /><path d="M13.500 0V26" stroke={C.dim} strokeWidth="1.800" strokeDasharray="2 2" /></Icon>
        <Icon w={24} h={28} ml={21} c={C.dim}><path d="M3 0H21L12 10z" /><path d="M4.500 26H19.500L12 18.500z" fill="none" stroke={C.dim} strokeWidth="2" /><path d="M0 14H24" stroke={C.dim} strokeWidth="1.800" strokeDasharray="2 2" /></Icon>
      </Row>
    </Panel>
  );
}

const LayerList = styled.div`
  ${place}
  display: flex;
  width: 510px;
  height: 142px;
  border: 2px solid #616161;
  border-radius: 5px;
  overflow: hidden;
`;
const LayerRows = styled.div`
  width: 482px;
`;
const LayerRow = styled.div`
  display: flex;
  align-items: center;
  height: ${(p) => p.$h}px;
  border-bottom: ${(p) => (p.$last ? 0 : 2)}px solid #616161;
`;
const LayerTrack = styled.div`
  flex: 1;
  display: flex;
  flex-direction: column;
  align-items: center;
  background: ${C.soft};
`;
const Eye = ({ c = C.icon, mt }) => (
  <Icon w={26} h={18} ml={10} mt={mt} c={c}>
    <path d="M0 9C6 -1 20 -1 26 9C20 19 6 19 0 9z" />
    <circle cx="13" cy="9" r="6.600" fill={C.bg} /><circle cx="13" cy="9" r="4.200" /><circle cx="14.500" cy="7.500" r="1.800" fill={C.bg} />
  </Icon>
);
function AppearancePanel() {
  return (
    <Panel $h={248} $last>
      <Tabs items={[["アピアランス", 167, 18, -0.3], ["透明", 78, 17, 0]]} />
      <LayerList $ml={10} $mt={12}>
        <LayerRows>
          <LayerRow $h={40}>
            <Eye mt={-9} /><VRule $w={2} $h={39} $ml={12} $c={C.line} /><Chevron dir="right" ml={5} mt={-11} />
            <Linked $ml={21} $mt={-7} $w={37}>線 :</Linked>
            <Icon w={36} h={36} ml={97} mt={-9}><rect width="36" height="36" fill="#303030" /><rect x="2" y="2" width="32" height="32" fill="#fff" /><rect x="4" y="4" width="28" height="28" fill="#303030" /><rect x="6.500" y="6.500" width="23" height="23" fill="#000" stroke="#fff" strokeWidth="2" /></Icon>
            <Label $ml={28} $mt={-8} $size={25} $ls={0.4}>0.353 mm</Label>
          </LayerRow>
          <LayerRow $h={50}>
            <Eye /><VRule $w={2} $h={48} $ml={12} $c={C.line} /><Chevron dir="right" ml={5} mt={-1} />
            <Label $ml={21} $w={62} $mt={1}>塗り :</Label>
            <Icon w={36} h={36} ml={72}><rect width="36" height="36" fill="#303030" /><rect x="2" y="2" width="32" height="32" fill="#fff" /><rect x="4" y="4" width="28" height="28" fill="#303030" /><rect x="6" y="6" width="24" height="24" fill="#fff" /></Icon>
          </LayerRow>
          <LayerRow $h={48} $last>
            <Eye c="#747474" /><VRule $w={2} $h={48} $ml={12} $c={C.line} />
            <Linked $ml={50} $w={109} $mt={3}>不透明度 :</Linked><Label $ml={56} $mt={1}>初期設定</Label>
          </LayerRow>
        </LayerRows>
        <LayerTrack><Chevron dir="up" c={C.icon} sw={2} mt={-1} /><Thumb $w={20} $h={64} $mt={30} /><Chevron c={C.icon} sw={2} mt={-1} /></LayerTrack>
      </LayerList>
      <Row $h={36} $ml={24} $mt={1}>
        <Icon w={22} h={22}><rect x="2" y="2" width="18" height="18" fill="none" stroke={C.icon} strokeWidth="4" /></Icon>
        <Icon w={22} h={22} ml={30}><rect x="1" y="1" width="20" height="20" fill="none" stroke={C.icon} strokeWidth="2" /><rect x="4" y="4" width="14" height="14" /></Icon>
        <FxLabel $ml={30} $mt={-2}>fx</FxLabel>
        <Icon w={8} h={8} ml={1} mt={16}><path d="M1 2h6l-3 4z" /></Icon>
        <Icon w={22} h={22} ml={190}><circle cx="11" cy="11" r="9" fill="none" stroke={C.icon} strokeWidth="3" /><path d="M4.500 4.500L17.500 17.500" stroke={C.icon} strokeWidth="3" /></Icon>
        <NewItem ml={31} c={C.dim} />
        <Trash ml={30} c={C.dim} />
      </Row>
    </Panel>
  );
}
const FxLabel = styled.span`
  ${place}
  width: 21px;
  font: italic 400 27px/28px "Open Sans", Inter, sans-serif;
  letter-spacing: -0.5px;
  color: ${C.icon};
`;
const RailText = styled.span`
  ${place}
  width: 31px;
  height: ${(p) => p.$h}px;
  display: flex;
  align-items: center;
  font: ${(p) => p.$font};
  color: ${C.icon};
`;
const OpenTypeO = styled(RailText)`
  background: linear-gradient(90deg, #d0d0d0 30%, #808080 75%);
  background-clip: text;
  color: transparent;
`;

function Right() {
  return (
    <RightDock>
      <DockHead><DoubleChevron ml={49} /><DoubleChevron right ml={518} /></DockHead>
      <DockBody>
        <IconRail>
          <RailGroup $h={194}>
            <GripBox $mt={6} />
            <Icon w={31} h={31} ml={5} mt={17}>
              <rect x="5" y="3.500" width="21" height="23" fill="none" stroke={C.icon} strokeWidth="2" />
              {[0, 12, 25].map((x) => [0, 12, 25].map((y) => (x === 12 && y === 12 ? null : <rect key={`${x}${y}`} x={x} y={y} width="6" height="6" />)))}
              <circle cx="15.500" cy="15.500" r="2.200" />
            </Icon>
            <Icon w={31} h={36} ml={5} mt={23}><path d="M0 0h2v36H0zM4.500 5h16v12h-16zM4.500 21h26.500v10h-26.500z" /></Icon>
            <Icon w={31} h={31} ml={5} mt={23}><path d="M0 0H18V8.500H8V18H0zM20.500 10.500H31V30H10.500V20H20.500z" /><rect x="11" y="11" width="7.500" height="7.500" /></Icon>
          </RailGroup>
          <RailGroup $h={194}>
            <GripBox $mt={6} />
            <Row $h={36} $ml={5} $mt={14}><RailText $h={36} $font='550 35px/36px Inter, sans-serif'>A</RailText><VRule $w={2} $h={36} $ml={-2} $c={C.icon} /></Row>
            <Icon w={26} h={30} ml={7} mt={26}><path d="M10 0H23V29.500H21V2.500H17V29.500H14.500V16H10A8 8 0 0 1 10 0z" /></Icon>
            <OpenTypeO $ml={5} $mt={19} $h={40} $font='italic 700 42px/40px "Liberation Serif", serif'>O</OpenTypeO>
          </RailGroup>
          <RailGroup $h={138}>
            <GripBox $mt={6} />
            <Icon w={25} h={26} ml={10} mt={20}><path d="M0 0L25 13L0 26z" /></Icon>
            <Icon w={31} h={31} ml={5} mt={27}>
              <path d="M5 26H1V1H26V5M5 5H30V30H5z" fill="none" stroke={C.icon} strokeWidth="2" />
              <path d="M17 5H25V20L21 16L17 20z" />
            </Icon>
          </RailGroup>
        </IconRail>
        <Panels>
          <SwatchPanel />
          <StrokePanel />
          <Panel $h={60}><Tabs fold items={[["グラデーション", 202, 9, -0.2]]} /></Panel>
          <Panel $h={60}><Tabs menu={false} items={[["分版プレビュー", 190, 18, 0], ["属性", 79, 17, 0]]} /></Panel>
          <AppearancePanel />
        </Panels>
      </DockBody>
    </RightDock>
  );
}

/* ---------- top bars ---------- */
const SearchBox = styled.div`
  ${place}
  width: 413px;
  height: 42px;
  display: flex;
  align-items: center;
  border: 2px solid #606060;
  border-radius: 5px;
  background: ${C.input};
`;
function Title() {
  return (
    <TitleBar>
      <Light $ml={16} $mt={1} $c="#ed6a5e" /><Light $ml={16} $mt={1} $c="#f5bf4f" /><Light $ml={16} $mt={1} $c="#61c554" />
      <Icon w={36} h={31} ml={30} mt={0}><path d="M18 0L36 17L32 20V31H22V19H14V31H4V20L0 17z" /></Icon>
      <VRule $ml={22} />
      <Icon w={34} h={22} ml={17} mt={-7}><path d="M0 0H16V22H0zM18 0H34V10H18zM18 12H34V22H18z" /></Icon>
      <Chevron ml={13} mt={-7} />
      <Label $ml={731} $mt={0} $w={670} $size={26} $ls={-0.2}>Adobe Illustrator 2020</Label>
      <VRule $ml={27} />
      <Label $ml={24} $mt={1} $w={160} $ls={-2.3} $c="#fff">プリントと校正</Label>
      <Chevron ml={11} sw={3.2} s={0.95} mt={3} />
      <VRule $ml={27} />
      <SearchBox $ml={10}>
        <Icon w={36} h={30} ml={6}><circle cx="13" cy="10" r="8" fill="none" stroke={C.icon} strokeWidth="2.200" /><path d="M8 16L1 25" stroke={C.icon} strokeWidth="2.600" /><path d="M22 15H34L28 21z" /></Icon>
        <Label $ml={8} $mt={9} $w={134} $size={24} $ls={-0.6} $c="#858585">Adobe Stock</Label>
        <Label $ml={3} $mt={9} $size={22} $c="#858585">を検索</Label>
      </SearchBox>
    </TitleBar>
  );
}
function Control() {
  return (
    <ControlBar>
      <SideGrip $ml={10} />
      <Label $ml={14} $w={237} $ls={-0.3}>選択なし</Label>
      <VRule $w={2} $h={44} $c="#4b4b4b" />
      <Box $w={77} $ml={12}><Cell $bg="#fff" /><Cell $w={35}><Chevron /></Cell></Box>
      <Box $w={77} $ml={11}>
        <Cell $bg="#000"><Icon w={36} h={36}><rect x="1" y="1" width="35" height="34" fill="#000" stroke="#e3e3e3" strokeWidth="2" /><rect x="12" y="12" width="12" height="12" fill="none" stroke="#fff" strokeWidth="2" /><rect x="15.500" y="15.500" width="5" height="5" fill="#fff" /></Icon></Cell>
        <Cell $w={35}><Chevron /></Cell>
      </Box>
      <Linked $ml={24} $mt={2} $w={37}>線 :</Linked>
      <Box $w={187} $ml={11}>
        <Cell $w={34}><Stepper /></Cell>
        <Cell $rule $start $pl={5} $bg={C.input}><Label $size={26} $w={101} $mt={3} $clip $c="#fff">0.353 m</Label></Cell>
        <Cell $w={36} $rule><Chevron /></Cell>
      </Box>
      <Box $w={218} $ml={11}><Cell $bg={C.paper}><Sample $w={99} /><Label $ml={12} $mt={2} $c="#000">均等</Label></Cell><Cell $w={35}><Chevron /></Cell></Box>
      <Box $w={212} $ml={10}><Cell $bg={C.paper}><Sample $w={94} $mt={-2} /><Label $ml={11} $mt={1} $c="#000">基本</Label></Cell><Cell $w={35}><Chevron /></Cell></Box>
      <Linked $ml={14} $w={110}>不透明度 :</Linked>
      <Box $w={167} $ml={11}>
        <Cell $start $pl={6} $bg={C.input}><Label $size={26} $mt={3} $c="#fff" $ls={-0.5}>100%</Label></Cell>
        <Cell $w={38} $rule><Chevron dir="right" /></Cell>
      </Box>
      <Label $ml={11} $w={112} $ls={-0.5} $mt={-1}>スタイル :</Label>
      <Box $w={78} $ml={7}><Cell $bg={C.paper} /><Cell $w={35}><Chevron /></Cell></Box>
      <VRule $w={2} $h={44} $ml={11} $c="#4b4b4b" />
      <PushButton $w={232} $ml={11} $ls={-0.3}>ドキュメント設定</PushButton>
      <PushButton $w={166} $ml={10}>環境設定</PushButton>
      <Icon w={34} h={33} ml={20}>
        <path d="M3 12H14M3 24H10M4 12V23M19 2H31M30 2V14M20 3V14M20 13H30" fill="none" stroke={C.icon} strokeWidth="2" />
        <path d="M0 10h4v4H0zM0 21h4v4H0zM17 0h4v4h-4zM29 0h4v4h-4zM29 11h4v4h-4z" />
        <path d="M14 11L30 27L21 27.500L14 33z" />
      </Icon>
      <Chevron ml={8} mt={-4} />
      <Icon w={30} h={28} ml={20} mt={-6} c="#727272"><path d="M4 2h9v9H4zM17 2h9v9h-9zM4 17h9v9H4zM17 17h9v9h-9zM14.200 0h1.600v28h-1.600zM0 13.300h30v1.500H0z" /></Icon>
      <Icon w={29} h={28} ml={24} mt={-2}><path d="M0 0h8v8H0zM0 10h8v8H0zM0 20h8v8H0zM10 9h3v5h-3z" /><path d="M13 9.500H20C29 9.500 29 18.500 20 18.500H13" fill="none" stroke={C.icon} strokeWidth="3.600" /></Icon>
      <Chevron ml={10} mt={-4} c="#707070" />
      <Icon w={23} h={17} ml={35} mt={-2}><path d="M0 0h4v3H0zM0 6h4v3H0zM0 13h4v3H0zM6 1h17v2H6zM6 7.300h17v2H6zM6 13.700h17v2H6z" /></Icon>
    </ControlBar>
  );
}

export default function App() {
  return (
    <>
      <Global />
      <Desktop>
        <Window>
          <Title />
          <Control />
          <Body>
            <ToolPanel />
            <DocumentPane />
            <Right />
          </Body>
        </Window>
      </Desktop>
    </>
  );
}
